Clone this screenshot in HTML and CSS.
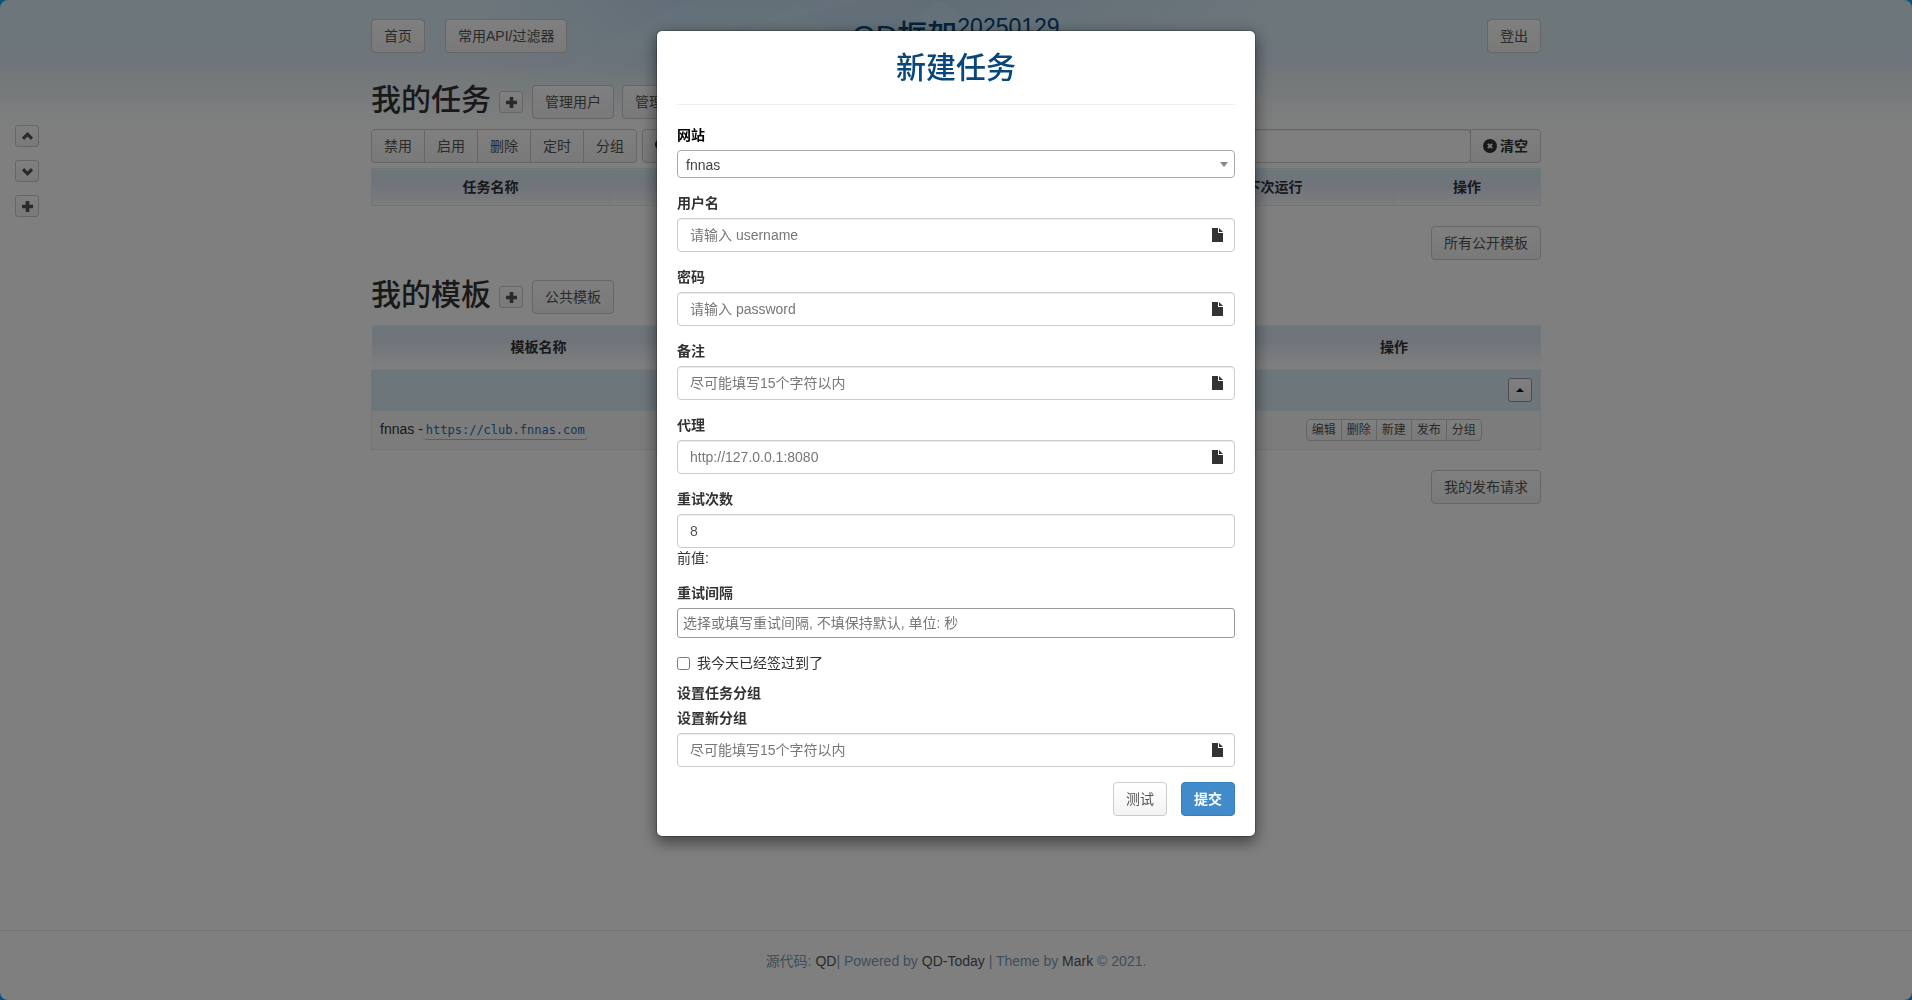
FILE: index.html
```html
<!DOCTYPE html>
<html lang="zh-CN">
<head>
    <meta charset="UTF-8">
    <meta name="viewport" content="width=device-width, initial-scale=1.0">
    <title>QD框架</title>
    <link rel="stylesheet" href="styles.css">
</head>
<body>
    <svg class="icon-defs" aria-hidden="true">
        <symbol id="icon-plus" viewBox="0 0 12 12"><path d="M4 0h4v4h4v4H8v4H4V8H0V4h4z"/></symbol>
        <symbol id="icon-up" viewBox="0 0 12 12"><path d="M6 1l6 6-2.300 2.700L6 6 2.300 9.700 0 7z"/></symbol>
        <symbol id="icon-down" viewBox="0 0 12 12"><path d="M6 11L0 5l2.300-2.700L6 6l3.700-3.700L12 5z"/></symbol>
        <symbol id="icon-file" viewBox="0 0 11 14"><path d="M0 0h6v5h5v9H0zM7 0l4 4H7z"/></symbol>
        <symbol id="icon-search" viewBox="0 0 14 14"><path fill-rule="evenodd" d="M5.500 0a5.500 5.500 0 1 0 3 10.100L12 13.600l1.600-1.600-3.500-3.500A5.500 5.500 0 0 0 5.500 0zm0 2a3.500 3.500 0 1 1 0 7 3.500 3.500 0 0 1 0-7z"/></symbol>
        <symbol id="icon-remove" viewBox="0 0 14 14"><path fill-rule="evenodd" d="M7 0a7 7 0 1 0 0 14A7 7 0 0 0 7 0zM5.500 4.200L7 5.700l1.500-1.500 1.300 1.300L8.300 7l1.500 1.500-1.300 1.300L7 8.300 5.500 9.800 4.200 8.500 5.700 7 4.200 5.500z"/></symbol>
    </svg>

    <div class="page">
        <svg class="banner" viewBox="0 0 800 110" preserveAspectRatio="none" aria-hidden="true">
            <path d="M60 80L210 0h30l10 30z"/>
            <path d="M240 0l10 30 140-30z"/>
            <path d="M210 60L320 5l80 70z"/>
            <path d="M400 40l60-40 90 60z"/>
        </svg>

        <nav class="side-tools">
            <button class="btn btn-xs" aria-label="顶部"><svg class="icon"><use href="#icon-up"/></svg></button>
            <button class="btn btn-xs" aria-label="底部"><svg class="icon"><use href="#icon-down"/></svg></button>
            <button class="btn btn-xs" aria-label="新建"><svg class="icon"><use href="#icon-plus"/></svg></button>
        </nav>

        <div class="container">
            <header class="topbar">
                <div class="topbar-side">
                    <a class="btn" href="#">首页</a>
                    <a class="btn" href="#">常用API/过滤器</a>
                </div>
                <h1>QD框架<sup>20250129</sup></h1>
                <div class="topbar-side topbar-right">
                    <a class="btn" href="#">登出</a>
                </div>
            </header>

            <section class="tasks">
                <div class="section-title">
                    <h2>我的任务</h2>
                    <button class="btn btn-xs" aria-label="新建任务"><svg class="icon"><use href="#icon-plus"/></svg></button>
                    <a class="btn" href="#">管理用户</a>
                    <a class="btn" href="#">管理网站</a>
                </div>
                <div class="toolbar">
                    <div class="btn-group">
                        <button class="btn">禁用</button>
                        <button class="btn">启用</button>
                        <button class="btn">删除</button>
                        <button class="btn">定时</button>
                        <button class="btn">分组</button>
                    </div>
                    <div class="btn-group search">
                        <button class="btn btn-strong" aria-label="搜索"><svg class="icon-lg"><use href="#icon-search"/></svg></button>
                        <input class="form-control" type="text" aria-label="搜索任务">
                        <button class="btn btn-strong"><svg class="icon-lg"><use href="#icon-remove"/></svg> 清空</button>
                    </div>
                </div>
                <table class="table task-table">
                    <thead>
                        <tr>
                            <th class="col-name">任务名称</th>
                            <th class="col-blank"></th>
                            <th class="col-name">下次运行</th>
                            <th class="col-action">操作</th>
                        </tr>
                    </thead>
                </table>
                <div class="section-foot"><a class="btn" href="#">所有公开模板</a></div>
            </section>

            <section class="templates">
                <div class="section-title">
                    <h2>我的模板</h2>
                    <button class="btn btn-xs" aria-label="新建模板"><svg class="icon"><use href="#icon-plus"/></svg></button>
                    <a class="btn" href="#">公共模板</a>
                </div>
                <table class="table tpl-table">
                    <thead>
                        <tr>
                            <th class="col-tpl">模板名称</th>
                            <th></th>
                            <th class="col-tpl-action">操作</th>
                        </tr>
                    </thead>
                    <tbody>
                        <tr class="group-row">
                            <td colspan="3"><button class="btn btn-toggle" aria-label="收起"><span class="caret-up"></span></button></td>
                        </tr>
                        <tr class="tpl-row">
                            <td>fnnas -<a class="site" href="#">https://club.fnnas.com</a></td>
                            <td></td>
                            <td>
                                <div class="btn-group btn-group-xs">
                                    <button class="btn">编辑</button>
                                    <button class="btn">删除</button>
                                    <button class="btn">新建</button>
                                    <button class="btn">发布</button>
                                    <button class="btn">分组</button>
                                </div>
                            </td>
                        </tr>
                    </tbody>
                </table>
                <div class="section-foot"><a class="btn" href="#">我的发布请求</a></div>
            </section>
        </div>

        <footer>源代码: <a href="#">QD</a>| Powered by <a href="#">QD-Today</a> | Theme by <a href="#">Mark</a> © 2021.</footer>
    </div>

    <div class="modal-backdrop">
        <div class="modal" role="dialog" aria-labelledby="modal-title">
            <h2 id="modal-title">新建任务</h2>
            <hr>
            <form>
                <div class="form-group">
                    <label class="label-site" for="site">网站</label>
                    <div class="select-wrap">
                        <select id="site"><option>fnnas</option></select>
                    </div>
                </div>
                <div class="form-group">
                    <label for="username">用户名</label>
                    <div class="has-icon">
                        <input class="form-control" id="username" type="text" placeholder="请输入 username">
                        <svg class="icon-file"><use href="#icon-file"/></svg>
                    </div>
                </div>
                <div class="form-group">
                    <label for="password">密码</label>
                    <div class="has-icon">
                        <input class="form-control" id="password" type="text" placeholder="请输入 password">
                        <svg class="icon-file"><use href="#icon-file"/></svg>
                    </div>
                </div>
                <div class="form-group">
                    <label for="note">备注</label>
                    <div class="has-icon">
                        <input class="form-control" id="note" type="text" placeholder="尽可能填写15个字符以内">
                        <svg class="icon-file"><use href="#icon-file"/></svg>
                    </div>
                </div>
                <div class="form-group">
                    <label for="proxy">代理</label>
                    <div class="has-icon">
                        <input class="form-control" id="proxy" type="text" placeholder="http://127.0.0.1:8080">
                        <svg class="icon-file"><use href="#icon-file"/></svg>
                    </div>
                </div>
                <div class="form-group">
                    <label for="retry">重试次数</label>
                    <input class="form-control" id="retry" type="text" value="8">
                    <div class="help">前值:</div>
                </div>
                <div class="form-group">
                    <label for="interval">重试间隔</label>
                    <input class="tag-input" id="interval" type="text" placeholder="选择或填写重试间隔, 不填保持默认, 单位: 秒">
                </div>
                <label class="checkbox"><input type="checkbox"> 我今天已经签过到了</label>
                <div class="group-title">设置任务分组</div>
                <div class="form-group">
                    <label for="group">设置新分组</label>
                    <div class="has-icon">
                        <input class="form-control" id="group" type="text" placeholder="尽可能填写15个字符以内">
                        <svg class="icon-file"><use href="#icon-file"/></svg>
                    </div>
                </div>
                <div class="modal-actions">
                    <button class="btn" type="button">测试</button>
                    <button class="btn btn-primary" type="button">提交</button>
                </div>
            </form>
        </div>
    </div>
</body>
</html>
```

FILE: styles.css
```css
* {
    box-sizing: border-box;
}

html {
    background: #14a0ff;
}

body {
    margin: 0;
    font-family: "Liberation Sans", Arial, "Noto Sans CJK SC", sans-serif;
    font-size: 14px;
    line-height: 20px;
    color: #333;
}

h1, h2 {
    margin: 0;
    font-size: 30px;
    line-height: 33px;
    font-weight: 500;
}

a {
    color: #333;
    text-decoration: none;
}

.icon-defs {
    display: none;
}

.icon, .icon-lg {
    width: 11px;
    height: 11px;
    fill: currentColor;
}

.icon-lg {
    width: 14px;
    height: 14px;
}

.page {
    position: relative;
    display: flex;
    flex-direction: column;
    min-height: 100vh;
    background: linear-gradient(#d9edf7, #d9edf7 40px, #dee9f8 62px, #e6f0f2 75px, #f0f5f9 95px, #fff 130px) #fff;
    border-radius: 8px;
}

/* soft polygons behind the header */
.banner {
    position: absolute;
    top: 0;
    left: 25%;
    width: 42%;
    height: 110px;
    background: linear-gradient(90deg, transparent, #c3dbf0 25%, #c3dcee 60%, transparent);
    fill: rgba(215, 240, 250, 0.25);
    -webkit-mask-image: linear-gradient(#000, transparent);
    mask-image: linear-gradient(#000, transparent);
}

.container {
    position: relative;
    width: 100%;
    max-width: 1170px;
    margin: 0 auto;
    flex: 1;
}

/* buttons */
.btn {
    display: inline-flex;
    align-items: center;
    justify-content: center;
    gap: 3px;
    height: 34px;
    padding: 0 12px;
    border: 1px solid #ccc;
    border-radius: 4px;
    background: linear-gradient(#fff, #f3f3f3);
    color: #555;
    font-family: inherit;
    font-size: 14px;
    line-height: 20px;
    white-space: nowrap;
}

.btn-xs {
    width: 24px;
    height: 22px;
    padding: 0;
    border-radius: 3px;
}

.btn-strong {
    color: #333;
    font-weight: bold;
}

.btn-primary {
    border-color: #357ebd;
    background: #428bca;
    color: #fff;
    font-weight: bold;
}

.btn-group {
    display: flex;
}

.btn-group > * {
    border-radius: 0;
}

.btn-group > * + * {
    margin-left: -1px;
}

.btn-group > :first-child {
    border-radius: 4px 0 0 4px;
}

.btn-group > :last-child {
    border-radius: 0 4px 4px 0;
}

.btn-group-xs {
    justify-content: center;
}

.btn-group-xs .btn {
    height: 22px;
    padding: 0 5px;
    font-size: 12px;
}

.side-tools {
    position: fixed;
    top: 125px;
    left: 15px;
    display: flex;
    flex-direction: column;
    gap: 13px;
}

/* header */
.topbar {
    display: flex;
    padding: 19px 0 32px;
}

.topbar h1 {
    height: 34px;
    color: #08467b;
    text-align: center;
}

.topbar sup {
    font-size: 23px;
    line-height: 0;
}

.topbar-side {
    display: flex;
    flex: 1;
    gap: 20px;
}

.topbar-right {
    justify-content: flex-end;
}

.section-title {
    display: flex;
    align-items: center;
    gap: 8px;
    margin-bottom: 10px;
}

.section-title h2 {
    padding-bottom: 5px;
    line-height: 29px;
}

.section-title .btn-xs {
    margin-right: 1px;
}

.section-foot {
    display: flex;
    justify-content: flex-end;
    margin: 20px 0;
}

.toolbar {
    display: flex;
    gap: 5px;
    margin-bottom: 5px;
}

.search {
    flex: 1;
}

.search .form-control {
    flex: 1;
}

/* tables */
.table {
    width: 100%;
    table-layout: fixed;
    border-collapse: collapse;
    border: 1px solid #e4eaee;
}

.table th {
    height: 37px;
    padding: 0;
    border: 1px solid #e4eaee;
    background: linear-gradient(#d9edf7, #dfe9f5 14px, #f4f7fa 33px, #fff);
    font-weight: bold;
}

.col-name {
    width: 238px;
}

.col-action {
    width: 147px;
}

.table.tpl-table th {
    height: 45px;
    border-color: transparent;
}

.col-tpl {
    width: 334px;
}

.col-tpl-action {
    width: 293px;
}

.tpl-table td {
    padding: 8px;
}

.group-row {
    background: #d9edf7;
    text-align: right;
}

.group-row td {
    height: 41px;
    line-height: 0;
}

.tpl-row {
    background: #f9f9f9;
}

.btn-toggle {
    width: 24px;
    height: 24px;
    padding: 0;
    border-color: #999;
    border-radius: 3px;
}

.caret-up {
    border: 4px solid transparent;
    border-top: 0;
    border-bottom-color: #111;
}

.site {
    padding: 2px 3px;
    border-bottom: 1px solid #bbb;
    border-radius: 4px;
    color: #2a6db5;
    font-family: "DejaVu Sans Mono", monospace;
    font-size: 12px;
}

footer {
    padding: 20px 0 29px;
    border-top: 1px solid #e5e5e5;
    color: #7f9db5;
    text-align: center;
}

footer a {
    color: #555;
}

/* modal */
.modal-backdrop {
    position: absolute;
    inset: 0;
    padding-top: 30px;
    background: rgba(0, 0, 0, 0.5);
}

.modal {
    width: 600px;
    margin: 0 auto;
    padding: 20px;
    border: 1px solid rgba(0, 0, 0, 0.2);
    border-radius: 6px;
    background: #fff;
    background-clip: padding-box;
    box-shadow: 0 5px 15px rgba(0, 0, 0, 0.5);
}

.modal h2 {
    color: #08467b;
    text-align: center;
}

hr {
    margin: 20px 0;
    border: 0;
    border-top: 1px solid #eee;
}

.form-group {
    margin-bottom: 15px;
}

.form-group label {
    display: block;
    margin-bottom: 5px;
    font-weight: bold;
}

.form-group .label-site {
    color: #000;
}

.form-control {
    display: block;
    width: 100%;
    height: 34px;
    padding: 6px 12px;
    border: 1px solid #ccc;
    border-radius: 4px;
    background: #fff;
    box-shadow: inset 0 1px 1px rgba(0, 0, 0, 0.075);
    color: #555;
    font-family: inherit;
    font-size: 14px;
}

::placeholder {
    color: #777;
}

.has-icon {
    position: relative;
}

.icon-file {
    position: absolute;
    top: 10px;
    right: 12px;
    width: 11px;
    height: 14px;
    fill: #333;
}

.select-wrap {
    position: relative;
}

.select-wrap::after {
    content: "";
    position: absolute;
    top: 12px;
    right: 7px;
    border: 4px solid transparent;
    border-top: 5px solid #888;
    border-bottom: 0;
}

select {
    display: block;
    width: 100%;
    height: 28px;
    padding: 1px 8px 0;
    appearance: none;
    border: 1px solid #aaa;
    border-radius: 4px;
    background: #fff;
    color: #444;
    font-family: inherit;
    font-size: 14px;
}

.tag-input {
    display: block;
    width: 100%;
    height: 30px;
    padding: 0 5px;
    border: 1px solid #999;
    border-radius: 3px;
    font-family: inherit;
    font-size: 14px;
}

.checkbox {
    display: flex;
    align-items: center;
    gap: 7px;
    margin-bottom: 10px;
}

.checkbox input {
    width: 13px;
    height: 13px;
    margin: 0;
}

.group-title {
    margin-bottom: 5px;
    font-weight: bold;
}

.modal-actions {
    display: flex;
    justify-content: flex-end;
    gap: 14px;
}
```
